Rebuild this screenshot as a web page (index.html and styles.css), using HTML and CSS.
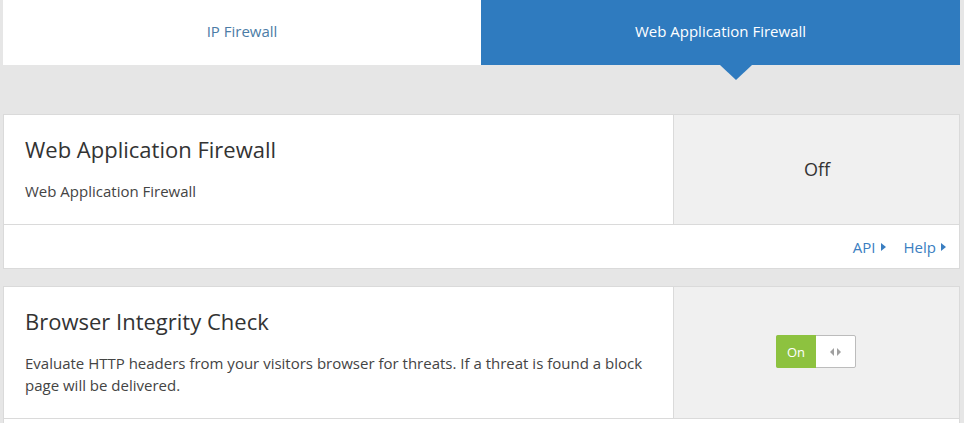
FILE: index.html
```html
<!DOCTYPE html>
<html>
<head>
<meta charset="utf-8">
<link rel="stylesheet" href="styles.css">
</head>
<body>
<div class="page">
  <div class="tabs">
    <div class="tab">IP Firewall</div>
    <div class="tab active">Web Application Firewall</div>
  </div>
  <div class="band"><span class="pointer"></span></div>
  <section class="card">
    <div class="row">
      <div class="main">
        <h3 class="title">Web Application Firewall</h3>
        <p class="desc">Web Application Firewall</p>
      </div>
      <div class="side"><span class="state">Off</span></div>
    </div>
    <div class="footer">
      <a class="link">API<span class="caret"></span></a>
      <a class="link">Help<span class="caret"></span></a>
    </div>
  </section>
  <section class="card">
    <div class="row">
      <div class="main">
        <h3 class="title">Browser Integrity Check</h3>
        <p class="desc">Evaluate HTTP headers from your visitors browser for threats. If a threat is found a block page will be delivered.</p>
      </div>
      <div class="side">
        <div class="toggle">
          <span class="toggle-on">On</span>
          <span class="toggle-knob"><span class="arr left"></span><span class="arr right"></span></span>
        </div>
      </div>
    </div>
    <div class="footer"></div>
  </section>
</div>
</body>
</html>
```
FILE: styles.css
```css
html, body {
  margin: 0;
  padding: 0;
  background: #e6e6e6;
}
body {
  font-family: "Open Sans", "Noto Sans", sans-serif;
  color: #333;
  overflow: hidden;
}
.page {
  width: 957px;
  margin-left: 3px;
}
.tabs {
  display: grid;
  grid-template-columns: 478px 479px;
  height: 65px;
}
.tab {
  display: flex;
  align-items: center;
  justify-content: center;
  background: #fff;
  color: #4b7ca6;
  font-size: 15px;
  padding-bottom: 3px;
}
.tab.active {
  background: #2f7bbf;
  color: #fff;
}
.band {
  height: 49px;
  position: relative;
}
.pointer {
  position: absolute;
  left: 717px;
  top: 0;
  width: 0;
  height: 0;
  border-left: 16px solid transparent;
  border-right: 16px solid transparent;
  border-top: 15px solid #2f7bbf;
}
.card {
  background: #fff;
  border: 1px solid #dadada;
  margin-bottom: 17px;
}
.row {
  display: grid;
  grid-template-columns: 1fr 286px;
  border-bottom: 1px solid #dadada;
}
.main {
  padding: 19px 30px 22px 21px;
}
.title {
  margin: 0;
  font-size: 22px;
  font-weight: 400;
  line-height: 30px;
  color: #333;
}
.desc {
  margin: 16px 0 0;
  font-size: 15px;
  line-height: 22px;
  color: #444;
}
.side {
  background: #f0f0f0;
  border-left: 1px solid #dadada;
  display: flex;
  align-items: center;
  justify-content: center;
}
.state {
  font-size: 18px;
  color: #333;
  margin-left: 1px;
  margin-top: -2px;
}
.footer {
  height: 43px;
  display: flex;
  align-items: center;
  justify-content: flex-end;
  gap: 18px;
  padding-right: 13px;
}
.link {
  color: #3a7ec1;
  font-size: 15px;
  display: flex;
  align-items: center;
  padding-top: 1px;
}
.caret {
  display: inline-block;
  width: 0;
  height: 0;
  margin-left: 5px;
  border-top: 4px solid transparent;
  border-bottom: 4px solid transparent;
  border-left: 5px solid #3a7ec1;
}
.toggle {
  display: flex;
  width: 80px;
  height: 33px;
  border: 1px solid #bcbcbc;
  border-radius: 2px;
  box-sizing: border-box;
  background: #fff;
  margin-top: -2px;
  margin-left: -1px;
}
.toggle-on {
  width: 40px;
  margin: -1px 0 -1px -1px;
  background: #8dc23f;
  color: #fff;
  font-size: 13px;
  display: flex;
  align-items: center;
  justify-content: center;
  border-radius: 2px 0 0 2px;
}
.toggle-knob {
  flex: 1;
  display: flex;
  align-items: center;
  justify-content: center;
  gap: 3px;
}
.arr {
  width: 0;
  height: 0;
  border-top: 4px solid transparent;
  border-bottom: 4px solid transparent;
}
.arr.left { border-right: 4px solid #a0a0a0; }
.arr.right { border-left: 4px solid #a0a0a0; }
```
